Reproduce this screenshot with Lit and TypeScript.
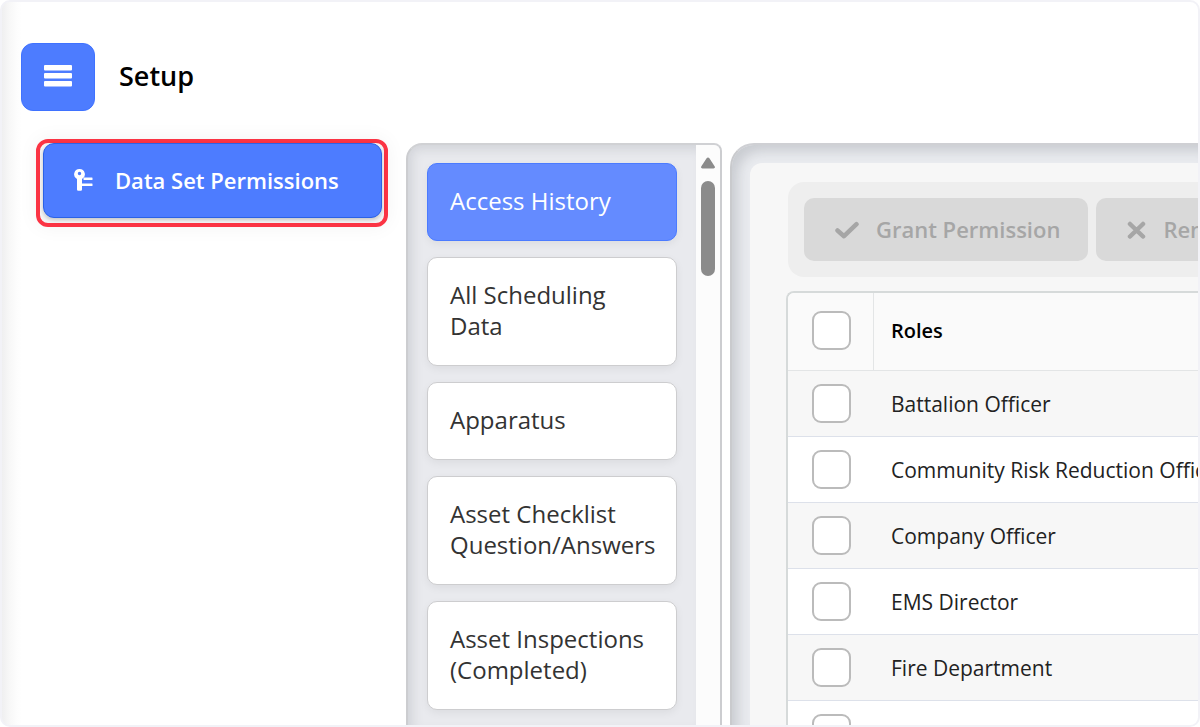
import { LitElement, html, css } from "lit";
import { customElement, state } from "lit/decorators.js";
import { classMap } from "lit/directives/class-map.js";

const DATA_SETS = [
  "Access History",
  "All Scheduling Data",
  "Apparatus",
  "Asset Checklist Question/Answers",
  "Asset Inspections (Completed)",
];

const ROLES = [
  "Battalion Officer",
  "Community Risk Reduction Officer",
  "Company Officer",
  "EMS Director",
  "Fire Department",
  "Firefighter",
];

@customElement("data-set-list")
class DataSetList extends LitElement {
  @state() selected = DATA_SETS[0];

  static styles = css`
    :host {
      display: flex;
      min-height: 0;
      box-sizing: border-box;
      overflow: hidden;
      border: 2px solid #cccdd0;
      border-top-color: #d0d1d4;
      border-bottom: 0;
      border-radius: 16px 8px 0 0;
      background: #e9eaee;
    }
    .items {
      flex: 1;
      min-width: 0;
      overflow: hidden;
      display: flex;
      flex-direction: column;
      gap: 16px;
      padding: 18px 19px 0;
      box-shadow: inset 6px 6px 12px -2px rgba(60, 64, 80, 0.14);
    }
    .item {
      flex: none;
      padding: 21px 22px 24px;
      border: 1px solid #cdcdcf;
      border-radius: 10px;
      background: #fff;
      box-shadow: 0 3px 8px rgba(0, 0, 0, 0.06);
      color: #333;
      font: 400 24px/31px "Open Sans", sans-serif;
      text-align: left;
    }
    .item.selected {
      border-color: #4b7bff;
      background: #648bff;
      color: #fff;
    }
    .track {
      flex: none;
      width: 24px;
      box-sizing: border-box;
      background: #fcfcfc;
      display: flex;
      flex-direction: column;
      align-items: center;
      gap: 12px;
      padding-top: 12px;
    }
    .thumb {
      width: 14px;
      height: 95px;
      border-radius: 7px;
      background: #8b8b8b;
    }
  `;

  render() {
    return html`
      <div class="items">
        ${DATA_SETS.map(
          (name) => html`<button
            type="button"
            class=${classMap({ item: true, selected: name === this.selected })}
            @click=${() => (this.selected = name)}
          >
            ${name}
          </button>`
        )}
      </div>
      <div class="track" aria-hidden="true">
        <svg width="14" height="12" viewBox="0 0 14 12">
          <path
            d="M7 .5c.6 0 1 .2 1.4.7l5.2 8.1c.8 1.2.1 2.2-1.1 2.2h-11C.3 11.500-.4 10.500.4 9.300l5.200-8.100C6 .7 6.400.5 7 .5z"
            fill="#8b8b8b"
          />
        </svg>
        <div class="thumb"></div>
      </div>
    `;
  }
}

@customElement("role-permissions")
class RolePermissions extends LitElement {
  static styles = css`
    :host {
      display: block;
      box-sizing: border-box;
      overflow: hidden;
      border: 2px solid #c9cacd;
      border-top-color: #cfd0d4;
      border-right: 0;
      border-bottom: 0;
      border-radius: 24px 0 0 0;
      background: #e9ebef;
      box-shadow: inset 8px 8px 12px -2px rgba(60, 64, 80, 0.18);
      padding: 18px 0 0 18px;
      font-family: "Open Sans", sans-serif;
    }
    .panel {
      min-height: 100%;
      box-sizing: border-box;
      border-radius: 12px 0 0 0;
      background: #f7f7f7;
      padding: 19px 0 0 36px;
      display: flex;
      flex-direction: column;
      gap: 14px;
    }
    .toolbar {
      display: flex;
      gap: 8px;
      margin-left: 2px;
      padding: 16px;
      border-radius: 16px 0 0 16px;
      background: #eee;
    }
    .action {
      flex: none;
      display: flex;
      align-items: center;
      gap: 17px;
      height: 63px;
      padding: 0 28px 2px 31px;
      border: 0;
      border-radius: 10px;
      background: #d9d9d9;
      color: #a6a6a6;
      font: 600 22px/30px "Open Sans", sans-serif;
      white-space: nowrap;
    }
    .action svg {
      margin-top: 2px;
    }
    .grid {
      overflow: hidden;
      border: 2px solid #d6dada;
      border-right: 0;
      border-bottom: 0;
      border-radius: 8px 0 0 0;
      background: #fff;
    }
    table {
      width: 100%;
      border-collapse: separate;
      border-spacing: 0;
      table-layout: fixed;
    }
    .pick {
      width: 86px;
    }
    th,
    td {
      box-sizing: border-box;
      padding: 0;
      text-align: left;
      color: #222;
      white-space: nowrap;
    }
    th {
      height: 78px;
      padding-bottom: 2px;
      border-bottom: 1px solid #e3e5e6;
      background: #fafafa;
      color: #000;
      font-size: 20px;
      font-weight: 600;
    }
    td {
      height: 66px;
      border-bottom: 1px solid #dde1ea;
      font-size: 21px;
    }
    tbody tr:nth-child(odd) {
      background: #f7f7f7;
    }
    th.pick {
      border-right: 1px solid #e3e5e6;
    }
    .name {
      padding-left: 17px;
    }
    input {
      appearance: none;
      display: block;
      width: 39px;
      height: 39px;
      margin: 0 0 0 24px;
      box-sizing: border-box;
      border: 2px solid #bbb;
      border-radius: 9px;
      background: #fff;
    }
    input:checked {
      border-color: #4b7bff;
      background: #4b7bff;
    }
  `;

  render() {
    return html`
      <div class="panel">
        <div class="toolbar">
          <button type="button" class="action" disabled>
            <svg width="24" height="18" viewBox="0 0 24 18" fill="none">
              <path d="M2.500 9.500 9 15.200 21.500 3.200" stroke="#a6a6a6" stroke-width="4.500" stroke-linejoin="round" stroke-linecap="round" />
            </svg>
            Grant Permission
          </button>
          <button type="button" class="action" disabled>
            <svg width="19" height="18" viewBox="0 0 19 18" fill="none">
              <path d="M3 3l13 12.500M16 3L3 15.500" stroke="#a6a6a6" stroke-width="4.500" stroke-linecap="round" />
            </svg>
            Remove Permission
          </button>
        </div>
        <div class="grid">
          <table>
            <thead>
              <tr>
                <th class="pick"><input type="checkbox" aria-label="Select all roles" /></th>
                <th class="name">Roles</th>
              </tr>
            </thead>
            <tbody>
              ${ROLES.map(
                (role, i) => html`<tr>
                  <td><input type="checkbox" id="role-${i}" /></td>
                  <td class="name"><label for="role-${i}">${role}</label></td>
                </tr>`
              )}
            </tbody>
          </table>
        </div>
      </div>
    `;
  }
}

@customElement("app-root")
class AppRoot extends LitElement {
  static styles = css`
    :host {
      display: block;
      height: 100vh;
      background: #fff;
      font-family: "Open Sans", sans-serif;
    }
    .frame {
      height: 100%;
      box-sizing: border-box;
      overflow: hidden;
      display: flex;
      flex-direction: column;
      gap: 28px;
      padding-top: 41px;
      border: 2px solid #f2f2f7;
      border-radius: 10px;
      background: linear-gradient(90deg, #efeff0, #f8f8f8 8px, #fdfdfd 15px, #fff 20px);
    }
    header {
      display: flex;
      align-items: center;
      gap: 24px;
      padding-left: 19px;
    }
    .menu {
      display: flex;
      align-items: center;
      justify-content: center;
      width: 74px;
      height: 68px;
      padding: 0 0 2px;
      border: 1px solid #3f72ff;
      border-radius: 12px;
      background: #4d7cff;
    }
    h1 {
      margin: 0;
      padding-bottom: 2px;
      color: #000;
      font-size: 27px;
      line-height: 36px;
      font-weight: 600;
    }
    .columns {
      flex: 1;
      min-height: 0;
      display: flex;
    }
    nav {
      flex: none;
      width: 352px;
      margin: 0 18px 0 34px;
    }
    .marked {
      padding: 0 2px 5px 3px;
      border: 4px solid #fb3444;
      border-radius: 12px;
      box-shadow: 0 0 20px rgba(0, 0, 0, 0.05);
      background: #f5f5f6;
    }
    .entry {
      display: flex;
      align-items: center;
      gap: 22px;
      width: 100%;
      height: 75px;
      padding: 0 30px 2px;
      border: 1px solid #2b62e6;
      border-radius: 11px;
      background: #4d7cff;
      box-shadow: 0 2px 4px rgba(0, 0, 0, 0.2);
      color: #fff;
      font: 600 22px/30px "Open Sans", sans-serif;
      white-space: nowrap;
    }
    data-set-list {
      flex: none;
      width: 316px;
      margin: 4px 8px 0 0;
    }
    role-permissions {
      flex: 1;
      min-width: 0;
      margin-top: 4px;
    }
  `;

  render() {
    return html`
      <div class="frame">
        <header>
          <button type="button" class="menu" aria-label="Menu">
            <svg width="28" height="22" viewBox="0 0 28 22" fill="#fff">
              <rect y="0" width="28" height="5.500" rx="1" />
              <rect y="8" width="28" height="5.500" rx="1" />
              <rect y="16" width="28" height="5.500" rx="1" />
            </svg>
          </button>
          <h1>Setup</h1>
        </header>
        <div class="columns">
          <nav>
            <div class="marked">
              <button type="button" class="entry">
                <svg width="19" height="22" viewBox="0 0 19 22" fill="#fff">
                  <path
                    fill-rule="evenodd"
                    d="M5.500 0a5.300 5.300 0 0 1 2.500 10V20.500a1.200 1.200 0 0 1-1.200 1.200H4.200A1.200 1.200 0 0 1 3 20.500V10A5.300 5.300 0 0 1 5.500 0zM5.500 2.800a1.700 1.700 0 1 0 0 3.400a1.700 1.700 0 1 0 0-3.400z"
                  />
                  <rect x="9.500" y="8.600" width="9" height="2.400" rx="0.500" />
                  <rect x="7" y="14.600" width="11.500" height="2.400" rx="0.500" />
                </svg>
                Data Set Permissions
              </button>
            </div>
          </nav>
          <data-set-list></data-set-list>
          <role-permissions></role-permissions>
        </div>
      </div>
    `;
  }
}
